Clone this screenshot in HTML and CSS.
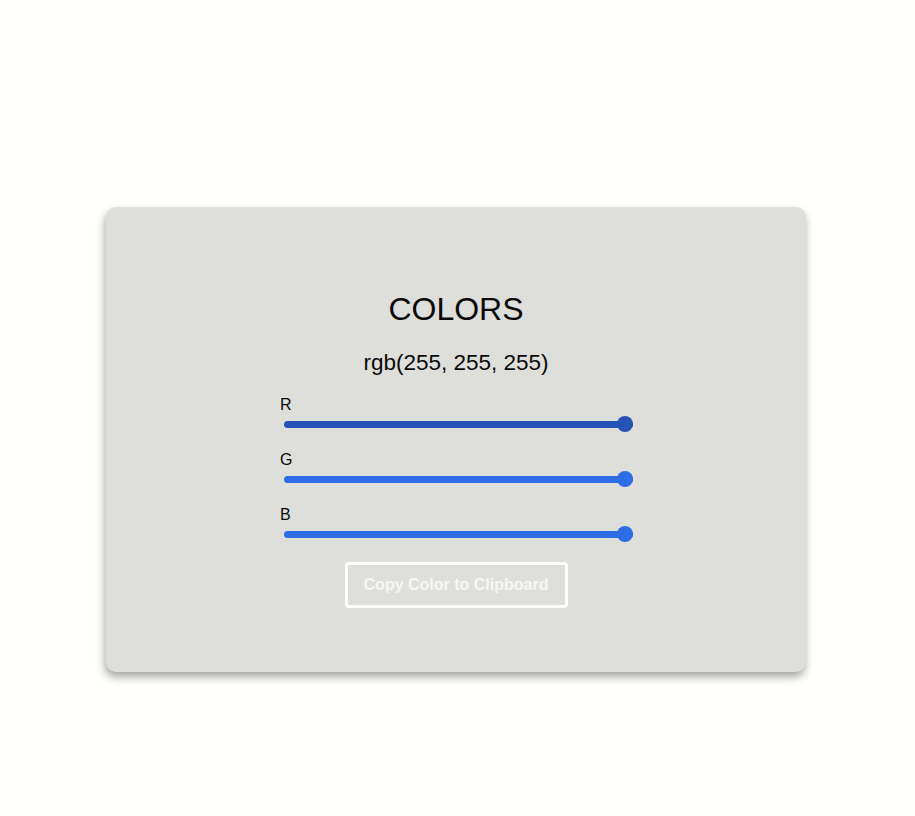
FILE: index.html
```html
<!DOCTYPE html>
<html>
<head>
<meta charset="utf-8">
<link rel="stylesheet" href="styles.css">
</head>
<body>
<main class="page">
  <section class="card">
    <h1 class="title">COLORS</h1>
    <p class="value">rgb(255, 255, 255)</p>
    <div class="sliders">
      <label class="row">
        <span class="lbl">R</span>
        <input class="range range-active" type="range" min="0" max="255" value="255">
      </label>
      <label class="row">
        <span class="lbl">G</span>
        <input class="range" type="range" min="0" max="255" value="255">
      </label>
      <label class="row">
        <span class="lbl">B</span>
        <input class="range" type="range" min="0" max="255" value="255">
      </label>
    </div>
    <button class="copy">Copy Color to Clipboard</button>
  </section>
</main>
</body>
</html>
```

FILE: styles.css
```css
html, body {
  margin: 0;
  padding: 0;
  background: #fefefb;
  font-family: "Liberation Sans", Arial, sans-serif;
}
.page {
  display: flex;
  justify-content: center;
  padding-top: 207px;
  padding-right: 3px;
  height: 816px;
  box-sizing: border-box;
}
.card {
  width: 700px;
  height: 465px;
  box-sizing: border-box;
  background: #dededb;
  border-radius: 10px;
  box-shadow: -1px 5px 8px rgba(0, 0, 0, 0.35);
  display: flex;
  flex-direction: column;
  align-items: center;
  padding-top: 84px;
}
.title {
  margin: 0;
  font-size: 32px;
  font-weight: 400;
  line-height: 37px;
  color: #0a0a0a;
}
.value {
  margin: 22px 0 0;
  font-size: 22.5px;
  line-height: 26px;
  color: #0a0a0a;
}
.sliders {
  width: 352px;
  margin-top: 20px;
  display: flex;
  flex-direction: column;
  gap: 19px;
}
.row {
  display: flex;
  flex-direction: column;
  align-items: flex-start;
  gap: 2px;
}
.lbl {
  font-size: 16px;
  line-height: 18px;
  color: #0a0a0a;
}
.range {
  -webkit-appearance: none;
  appearance: none;
  width: 349px;
  height: 16px;
  margin: 0 0 0 4px;
  background: transparent;
}
.range::-webkit-slider-runnable-track {
  height: 7px;
  border-radius: 4px;
  background: #2d6ee6;
}
.range::-webkit-slider-thumb {
  -webkit-appearance: none;
  width: 16px;
  height: 16px;
  border-radius: 50%;
  background: #2d6ee6;
  margin-top: -4.5px;
}
.range-active::-webkit-slider-runnable-track,
.range-active::-webkit-slider-thumb {
  background: #2553b7;
}
.copy {
  margin-top: 20px;
  width: 223px;
  height: 46px;
  background: transparent;
  border: 3px solid #ffffff;
  border-radius: 4px;
  color: #f5f5f3;
  font-family: "Liberation Sans", Arial, sans-serif;
  font-weight: 700;
  font-size: 16px;
  padding: 0;
}
```
